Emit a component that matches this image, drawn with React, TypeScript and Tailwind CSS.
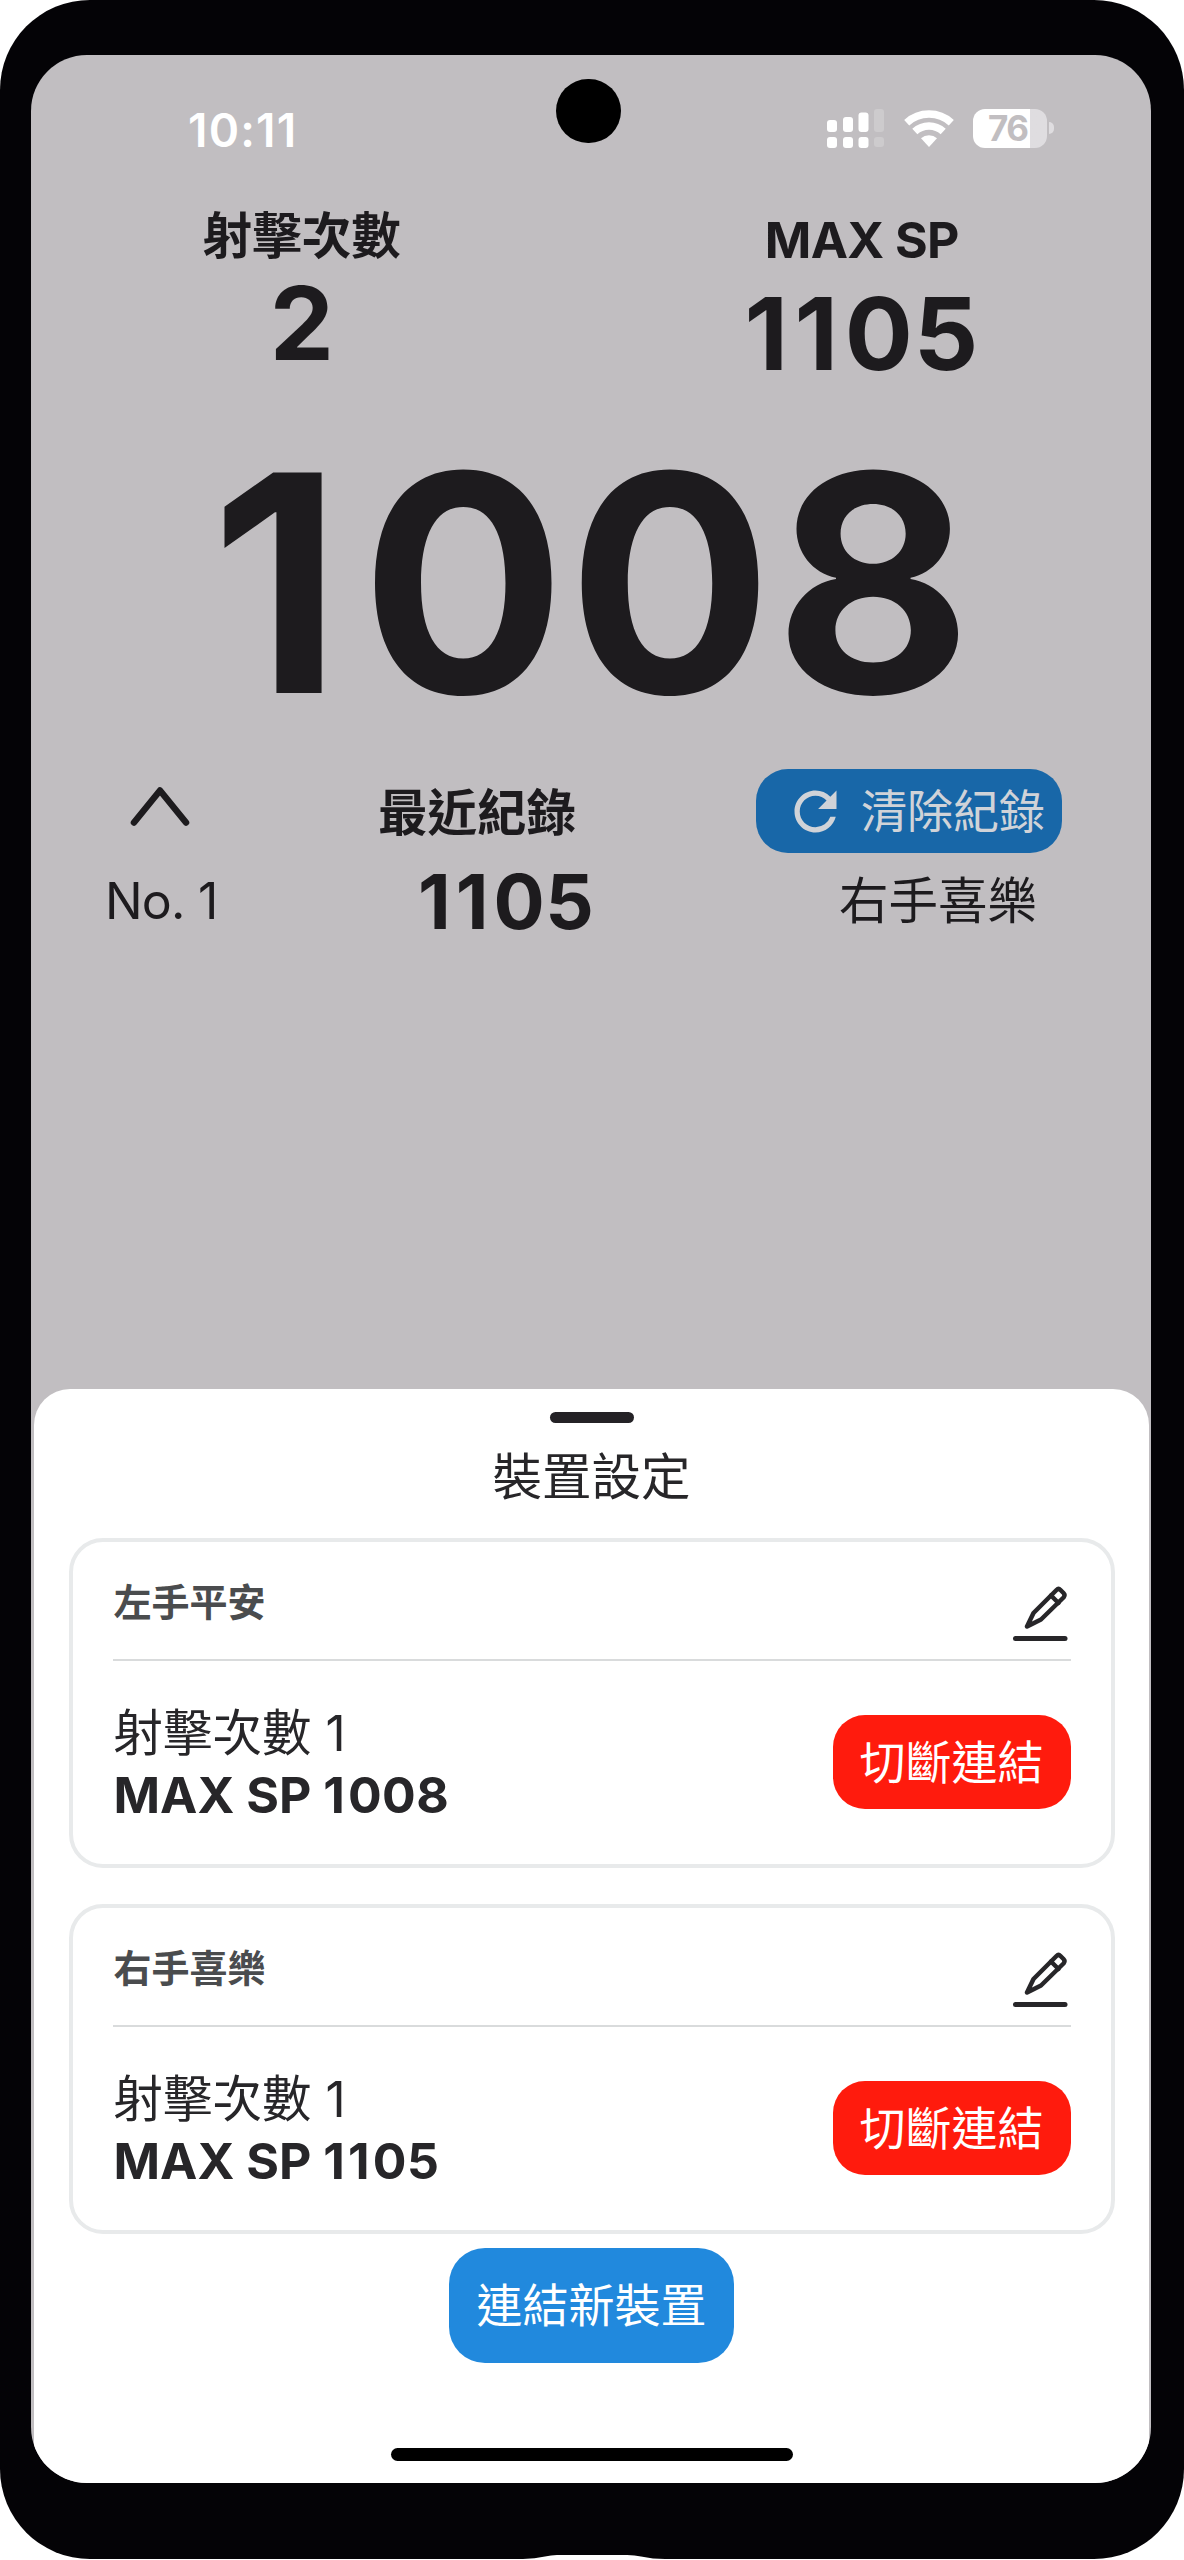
import { FC } from 'react';
import { MdRefresh } from 'react-icons/md';

interface Device {
  id: string;
  name: string;
  shots: number;
  maxSp: number;
}

const devices: Device[] = [
  { id: 'left', name: '左手平安', shots: 1, maxSp: 1008 },
  { id: 'right', name: '右手喜樂', shots: 1, maxSp: 1105 },
];

const Score: FC<{ value: number }> = ({ value }) => (
  <>
    {String(value).split('').map((digit, i) => (
      <span key={i} className={digit === '1' ? 'tracking-[0.065em]' : 'tracking-[0.008em]'}>
        {digit}
      </span>
    ))}
  </>
);

const SignalIcon: FC = () => (
  <svg className="w-[58px] h-10" viewBox="0 0 58 40" fill="#fff">
    <rect x="0" y="12" width="10" height="12" rx="3" />
    <rect x="16" y="9" width="10" height="15" rx="3" />
    <rect x="31.5" y="4.5" width="10" height="19.5" rx="3" />
    <rect x="0" y="29" width="10" height="11" rx="3" />
    <rect x="16" y="29" width="10" height="11" rx="3" />
    <rect x="31.5" y="29" width="10" height="11" rx="3" />
    <g opacity="0.2">
      <rect x="47" y="1" width="10" height="23" rx="3" />
      <rect x="47" y="29" width="10" height="10" rx="3" />
    </g>
  </svg>
);

const WifiIcon: FC = () => (
  <svg className="w-[50px] h-[37px]" viewBox="0 0 50 37" fill="none">
    <path d="M2.700 12.700A33 33 0 0 1 47.300 12.700" stroke="#fff" strokeWidth="7.500" />
    <path d="M10.800 21.500A21 21 0 0 1 39.200 21.500" stroke="#fff" strokeWidth="7.500" />
    <path d="M17 28.200A12 12 0 0 1 33 28.200L25 37z" fill="#fff" />
  </svg>
);

const BatteryIcon: FC = () => (
  <div className="flex items-center gap-[2px]">
    <div className="w-[74px] h-[39px] rounded-[12px] bg-linear-to-r from-white from-77% to-[#dfdde0] to-77% pl-[15px] flex items-center text-[35px] leading-none font-bold tracking-[-1.5px] text-[#c1bec1]">
      76
    </div>
    <div className="w-[5px] h-3 rounded-r-full bg-[#dfdde0]" />
  </div>
);

const EditIcon: FC = () => (
  <svg className="w-[56px] h-[56px]" viewBox="0 0 56 56" fill="none" stroke="#272629" strokeWidth="4.500" strokeLinecap="round" strokeLinejoin="round">
    <path d="M15 41.500 21.500 28 44.500 5q2-2 4 0l3 3q2 2 0 4.500L29 34.500z" />
    <path d="M39 10.500l7.500 7.500" />
    <path d="M3.500 53.500h49.500" strokeWidth="5" />
  </svg>
);

const DeviceCard: FC<{ device: Device }> = ({ device }) => (
  <div className="h-[330px] rounded-[34px] border-4 border-[#e8eaeb] bg-white px-[40px]">
    <div className="h-[119px] border-b-2 border-[#d9dbdc] flex items-start justify-between">
      <span className="pt-[32px] pl-px text-[38px] leading-[56px] font-semibold text-[#4a4c4e]">{device.name}</span>
      <button className="mt-[43px] mr-[3px]">
        <EditIcon />
      </button>
    </div>
    <div className="pt-[41px] flex items-start justify-between">
      <div className="pl-px leading-[62px] text-[#272629]">
        <p className="text-[49.5px]">{`射擊次數 ${device.shots}`}</p>
        <p className="text-[50px] font-bold">
          MAX SP <Score value={device.maxSp} />
        </p>
      </div>
      <button className="mt-[13px] w-[238px] h-[94px] rounded-[32px] bg-[#ff1b0d] text-[46px] leading-none text-white">
        切斷連結
      </button>
    </div>
  </div>
);

export default function App() {
  return (
    <div className="w-[1184px] h-[2560px] bg-white font-['Inter','Noto_Sans_CJK_TC',sans-serif]">
      <div className="relative w-full h-[2559px] rounded-[90px] bg-[#040306] pt-[55px] pl-[31px] pr-[33px]">
        <div className="h-[2428px] rounded-[56px] overflow-hidden bg-[#c1bec1] flex flex-col text-[#1d1b1e]">
          {/* status bar */}
          <div className="h-[148px] pt-[53px] pl-[157px] pr-[97px] flex items-start justify-between">
            <span className="text-[46px] leading-[44px] font-semibold tracking-[1.2px] [font-kerning:none] text-white">10:11</span>
            <div className="flex items-center gap-[19px]">
              <SignalIcon />
              <WifiIcon />
              <BatteryIcon />
            </div>
          </div>

          {/* totals */}
          <div className="h-[180px] flex">
            <div className="w-[542px] flex flex-col items-center pt-[2px]">
              <span className="text-[49.5px] leading-[62px] font-bold">射擊次數</span>
              <span className="text-[102px] leading-[112px] font-bold">2</span>
            </div>
            <div className="w-[579px] flex flex-col items-center pt-[5px]">
              <span className="text-[50px] leading-[64px] font-bold tracking-[-0.6px]">MAX SP</span>
              <span className="pt-[5px] text-[101px] leading-[112px] font-bold">
                <Score value={1105} />
              </span>
            </div>
          </div>

          <div className="h-[386px] pt-[14px] pl-[3px] text-center text-[303px] leading-[372px] font-bold">
            <Score value={1008} />
          </div>

          {/* history */}
          <div className="h-[84px] flex items-center">
            <svg className="ml-[97px] mb-[9px] w-[64px] h-[44px]" viewBox="0 0 64 44" fill="none" stroke="currentColor" strokeWidth="6.500" strokeLinecap="round" strokeLinejoin="round">
              <path d="M6 37.500 32 5.500l26 32" />
            </svg>
            <span className="ml-[186px] pt-[4px] w-[200px] text-[49.5px] font-bold">最近紀錄</span>
            <button className="ml-[178px] w-[306px] h-[84px] rounded-[32px] bg-[#1867a8] flex items-center text-[46px] text-[#d0d3d8]">
              <MdRefresh className="ml-7 w-[63px] h-[63px]" />
              <span className="ml-[14px]">清除紀錄</span>
            </button>
          </div>
          <div className="h-[96px] flex items-center text-[50px]">
            <span className="ml-[74px] w-[313px] tracking-[-0.8px]">No. 1</span>
            <span className="w-[421px] text-[76px] font-bold">
              <Score value={1105} />
            </span>
            <span className="text-[49.5px]">右手喜樂</span>
          </div>

          {/* bottom sheet */}
          <div className="mt-auto h-[1094px] ml-[3px] mr-[2px] rounded-t-[36px] bg-white flex flex-col items-center text-[#272629]">
            <div className="mt-[23px] w-[84px] h-[11px] rounded-full bg-[#242226]" />
            <h2 className="mt-[18px] h-[97px] text-[49.5px] leading-[72px]">裝置設定</h2>
            <div className="w-[1046px] flex flex-col gap-9">
              {devices.map((device) => (
                <DeviceCard key={device.id} device={device} />
              ))}
            </div>
            <button className="mt-[14px] w-[285px] h-[115px] rounded-[36px] bg-[#2189dd] text-[46px] text-white">
              連結新裝置
            </button>
            <div className="mt-[85px] w-[402px] h-[13px] rounded-full bg-black" />
          </div>
        </div>

        {/* front camera */}
        <div className="absolute left-[556px] top-[79px] w-[65px] h-[64px] rounded-full bg-black" />

        {/* notch in the lower edge of the frame */}
        <svg className="absolute left-[523px] bottom-0 w-[142px] h-[4px]" viewBox="0 0 142 4" fill="#fff">
          <path d="M0 4Q12 3.500 22 1.500 28 0 34 0h70q8 0 14 1.500Q130 4 142 4z" />
        </svg>
      </div>
    </div>
  );
}
